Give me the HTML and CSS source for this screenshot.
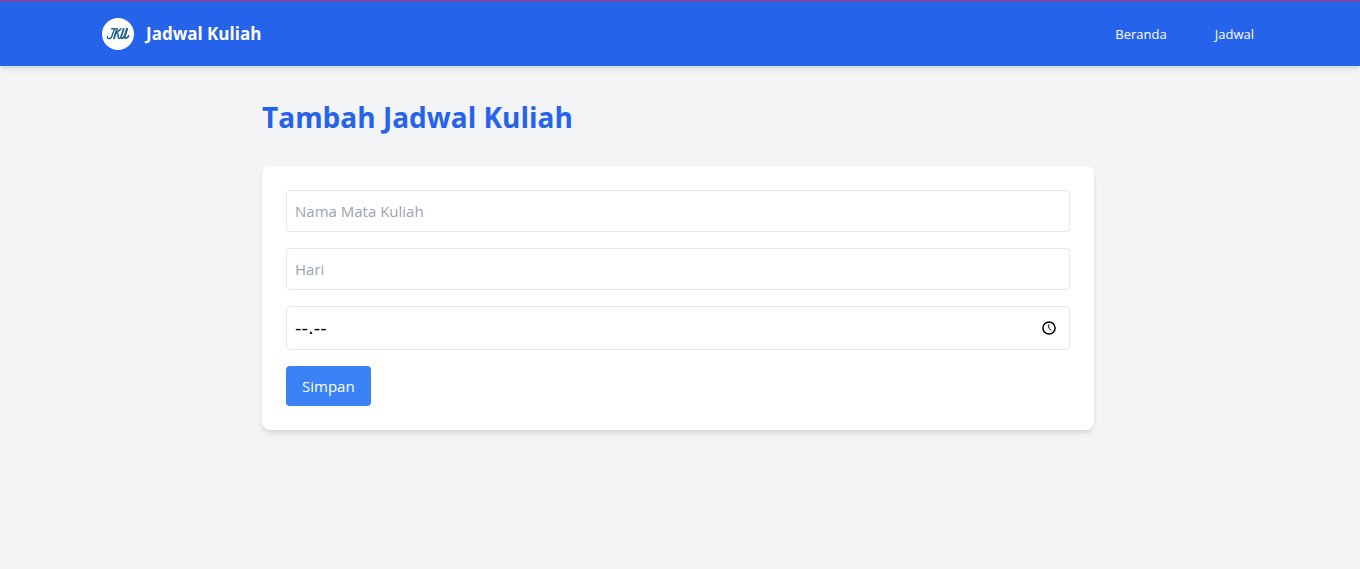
FILE: index.html
```html
<!DOCTYPE html>
<html lang="id">
<head>
<meta charset="utf-8">
<meta name="viewport" content="width=device-width, initial-scale=1">
<title>Jadwal Kuliah</title>
<link rel="stylesheet" href="styles.css">
</head>
<body>
<header class="navbar">
  <div class="navbar-inner">
    <a class="brand" href="#">
      <svg class="brand-logo" viewBox="0 0 32 32" aria-hidden="true">
        <circle cx="16" cy="16" r="16" fill="#fff"/>
        <g fill="none" stroke="#256388" stroke-linecap="round" stroke-linejoin="round">
          <path stroke-width="1.4" d="M9.6 10.8H13.6M5.6 18.6Q5 20.6 7 20.6Q9.2 20.6 10 18L12.4 10.9"/>
          <path stroke-width="1.9" d="M15 11L12 20.4"/>
          <path stroke-width="1.5" d="M18.8 10.9L14.3 15.4Q16.6 15.6 16.2 18Q15.8 20.4 17.4 20.4Q18.4 20.3 19 19"/>
          <path stroke-width="1.9" d="M21.6 11L19.4 17.8Q18.8 20.4 20.4 20.3Q22 20 22.8 17.6L25 11"/>
          <path stroke-width="1.8" d="M25 11L22.9 17.8Q22.3 20.4 24 20.2Q26 19.8 26.6 17.8"/>
        </g>
      </svg>
      <span class="brand-name">Jadwal Kuliah</span>
    </a>
    <nav class="nav-links">
      <a class="nav-link" href="#">Beranda</a>
      <a class="nav-link" href="#">Jadwal</a>
    </nav>
  </div>
</header>
<main class="content">
  <h1 class="title">Tambah Jadwal Kuliah</h1>
  <form class="card">
    <input class="field" type="text" placeholder="Nama Mata Kuliah" aria-label="Nama Mata Kuliah">
    <input class="field" type="text" placeholder="Hari" aria-label="Hari">
    <div class="time-field">
      <input class="time-input" type="text" inputmode="numeric" value="--.--" aria-label="Jam">
      <button class="time-button" type="button" aria-label="Pilih jam">
        <svg class="time-icon" viewBox="0 0 16 16" fill="none" stroke="currentColor" aria-hidden="true">
          <circle cx="8" cy="8" r="6.1" stroke-width="1.5"/>
          <path d="M7.8 4.4V8.2L10.4 10.5" stroke-width="1"/>
        </svg>
      </button>
    </div>
    <button class="submit" type="submit">Simpan</button>
  </form>
</main>
</body>
</html>
```
FILE: styles.css
```css
* {
  box-sizing: border-box;
}

body {
  margin: 0;
  background: #f3f4f6;
  font-family: "Segoe UI", "Open Sans", sans-serif;
  font-size: 16px;
  line-height: 24px;
}

.navbar {
  padding: 16px 20px 16px 16px;
  border-top: 2px solid #7d45a8;
  background: #2563eb;
  box-shadow: 0 4px 6px -1px rgb(0 0 0 / 10%), 0 2px 4px -2px rgb(0 0 0 / 10%);
  color: #fff;
}

.navbar-inner {
  display: flex;
  align-items: center;
  justify-content: space-between;
  max-width: 1152px;
  margin: 0 auto;
}

.brand {
  display: flex;
  align-items: center;
  gap: 12px;
  color: inherit;
  text-decoration: none;
}

.brand-logo {
  width: 32px;
  height: 32px;
}

.brand-name {
  font-size: 17px;
  font-weight: 700;
}

.nav-links {
  display: flex;
  gap: 48px;
}

.nav-link {
  color: inherit;
  font-size: 13px;
  text-decoration: none;
}

.content {
  max-width: 900px;
  margin: 0 auto;
  padding: 32px 36px 32px 32px;
}

.title {
  margin: 0 0 30px;
  color: #2563eb;
  font-size: 28px;
  font-weight: 700;
  line-height: 38px;
}

.card {
  display: flex;
  flex-direction: column;
  align-items: flex-start;
  gap: 16px;
  padding: 24px;
  border-radius: 8px;
  background: #fff;
  box-shadow: 0 4px 6px -1px rgb(0 0 0 / 10%), 0 2px 4px -2px rgb(0 0 0 / 10%);
}

.field,
.time-field {
  width: 100%;
  padding: 8px;
  border: 1px solid #e5e7eb;
  border-radius: 4px;
  background: #fff;
}

.field,
.time-input {
  color: #000;
  font-family: inherit;
  font-size: 15px;
  line-height: 24px;
}

.field {
  height: 42px;
}

.field::placeholder {
  color: #9ca3af;
}

.time-field {
  display: flex;
  align-items: center;
  height: 44px;
}

.time-input {
  flex: 1;
  min-width: 0;
  padding: 0;
  border: 0;
  background: transparent;
  font-family: "DejaVu Sans", sans-serif;
  font-size: 18px;
}

.time-button {
  display: flex;
  padding: 4px;
  border: 0;
  background: transparent;
  color: #000;
}

.time-icon {
  width: 16px;
  height: 16px;
}

.submit {
  padding: 8px 16px;
  border: 0;
  border-radius: 4px;
  background: #3b82f6;
  color: #fff;
  font-family: inherit;
  font-size: 15px;
  line-height: 24px;
}
```
